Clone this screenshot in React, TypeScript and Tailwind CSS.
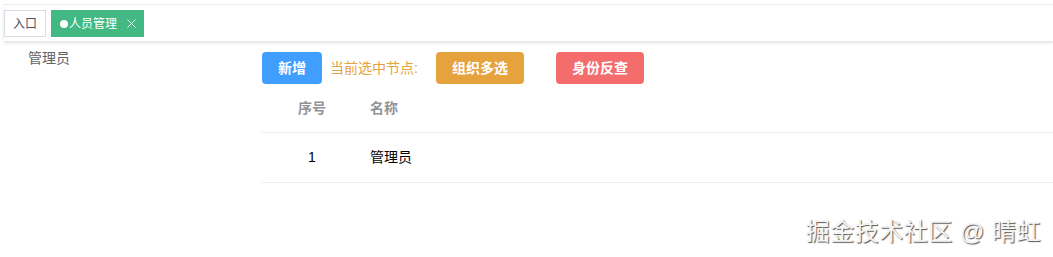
import React from 'react';
import { X } from 'lucide-react';

const FONT = "font-['Liberation_Sans','Noto_Sans_CJK_SC',sans-serif]";

function TagsBar() {
  return (
    <div className="ml-[4px] mt-[4px] h-[37px] border-t border-[#ececec] bg-white shadow-[0_2px_3px_rgba(0,0,0,0.12)] flex items-start gap-[5px] pt-[5px]">
      <div className="h-[27px] px-[8px] flex items-center border border-[#d8dce5] text-[12px] text-[#495060] bg-white">
        入口
      </div>
      <div className="h-[27px] pl-[9px] pr-[5px] flex items-center bg-[#42b983] text-[12px] text-white">
        <span className="w-[8px] h-[8px] rounded-full bg-white mr-[1px]" />
        人员管理
        <X size={15} strokeWidth={1.4} className="ml-[7px]" />
      </div>
    </div>
  );
}

export default function App() {
  return (
    <div className={`${FONT} w-[1053px] h-[257px] bg-white relative overflow-hidden`}>
      <TagsBar />
      <div className="flex">
        <div className="w-[261px] pl-[28px] pt-[7px] text-[14px] text-[#606266]">管理员</div>
        <div className="flex-1 pt-[11px]">
          <div className="flex items-center pl-[1px]">
            <button className="w-[60px] h-[32px] rounded-[4px] bg-[#409eff] text-white text-[14px] font-bold">新增</button>
            <span className="ml-[8px] text-[14px] text-[#e6a23c]">当前选中节点:</span>
            <button className="ml-[18px] w-[88px] h-[32px] rounded-[4px] bg-[#e6a23c] text-white text-[14px] font-bold">组织多选</button>
            <button className="ml-[32px] w-[88px] h-[32px] rounded-[4px] bg-[#f56c6c] text-white text-[14px] font-bold">身份反查</button>
          </div>
          <div>
            <div className="flex h-[49px] items-center border-b border-[#ebeef5] text-[14px] font-bold text-[#909399]">
              <div className="w-[102px] text-center">序号</div>
              <div className="pl-[7px]">名称</div>
            </div>
            <div className="flex h-[50px] items-center border-b border-[#ebeef5] text-[14px] text-[#000]">
              <div className="w-[102px] text-center">1</div>
              <div className="pl-[7px]">管理员</div>
            </div>
          </div>
        </div>
      </div>
      <div className="absolute right-[12px] top-[214px] text-[24px] text-[#f4f4f4] [text-shadow:1px_1px_1px_#555] tracking-[0.5px]">
        掘金技术社区 @ 晴虹
      </div>
    </div>
  );
}
